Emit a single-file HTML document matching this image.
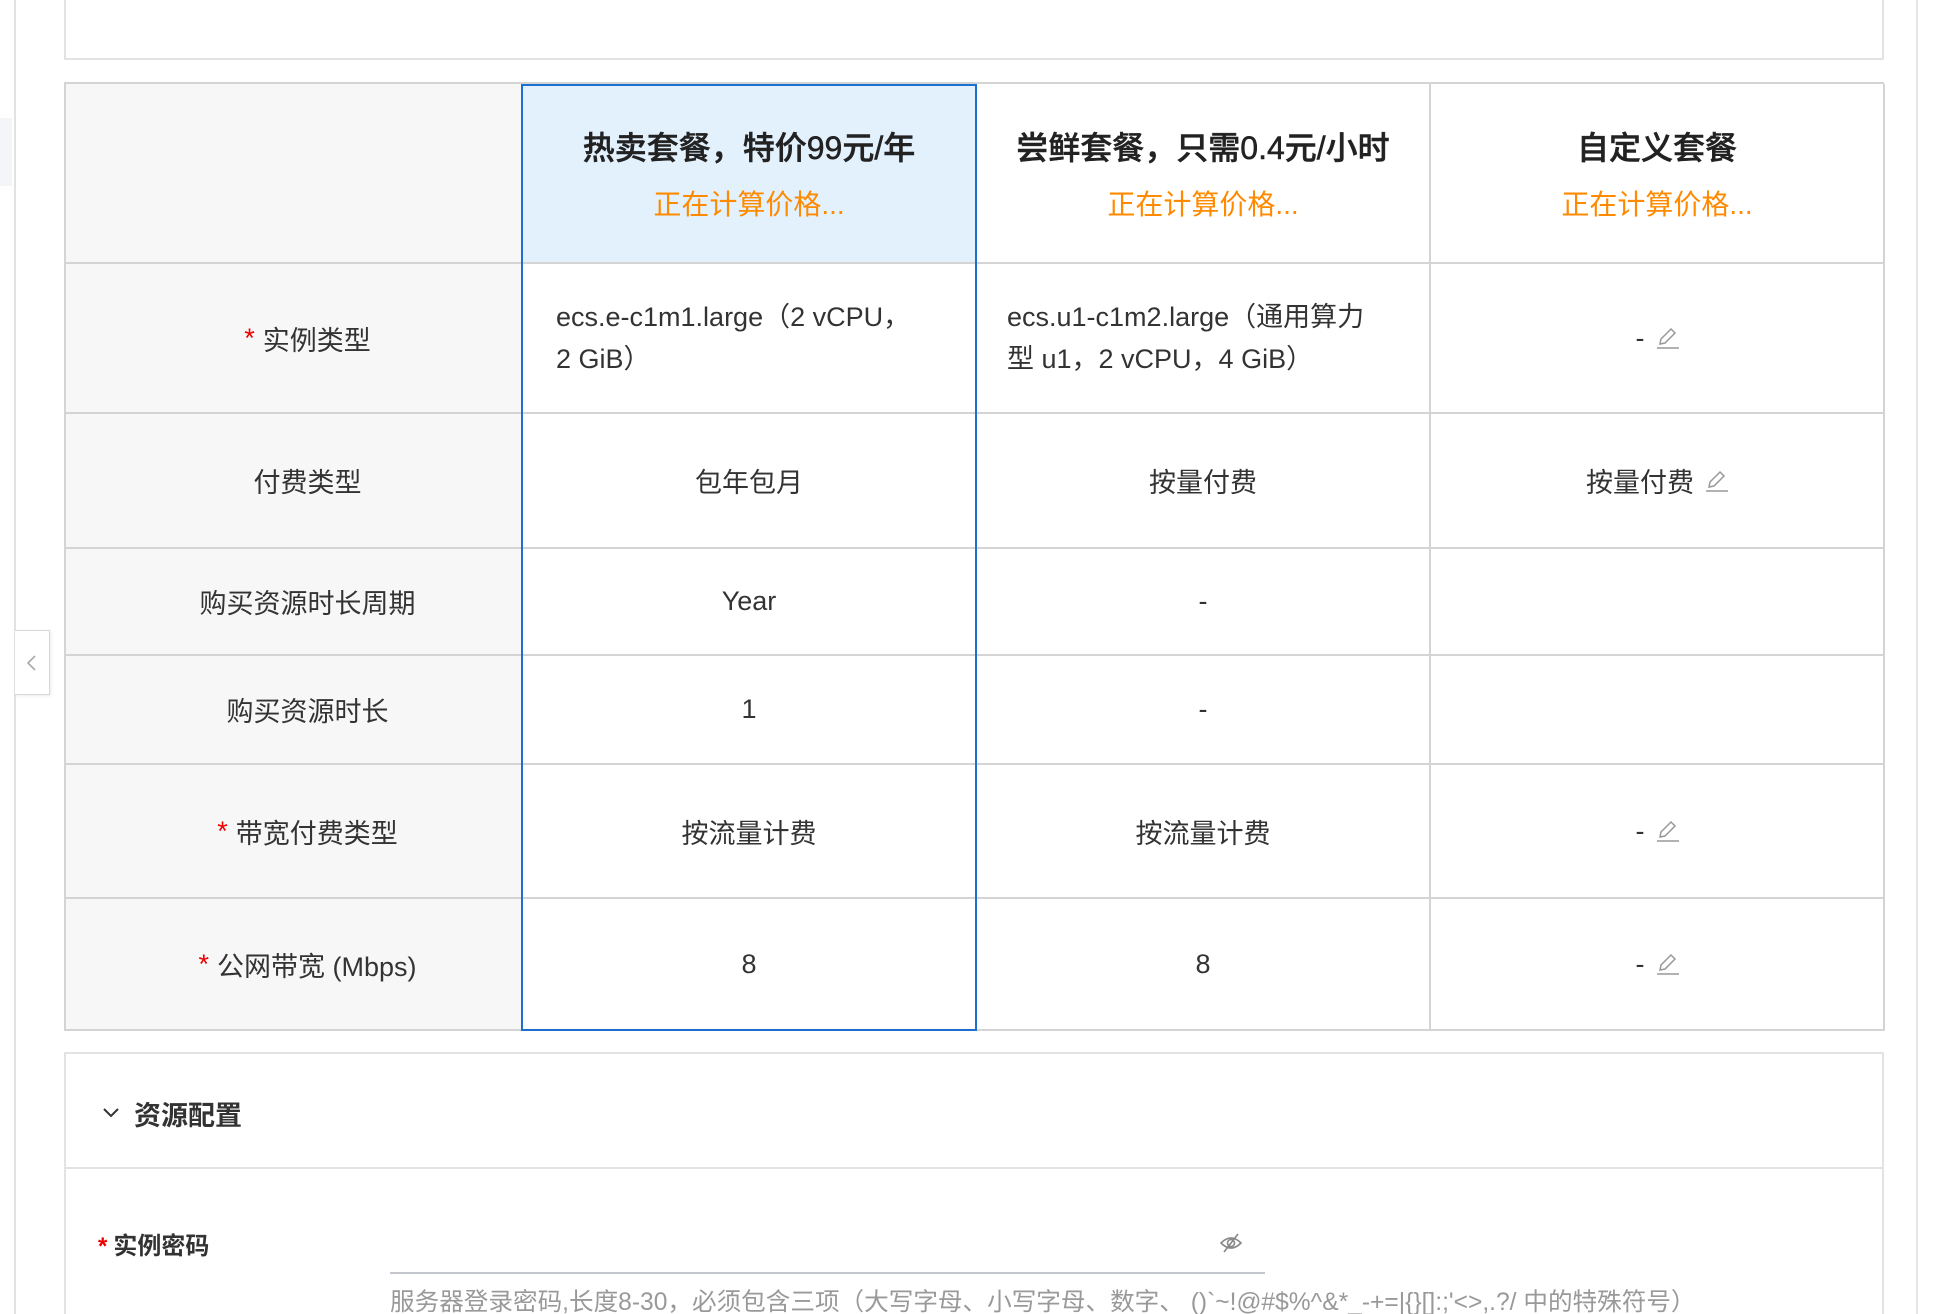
<!DOCTYPE html>
<html style="height:1314px;overflow:hidden"><head><meta charset="utf-8"><style>
*{box-sizing:border-box;margin:0;padding:0}
body{width:1940px;height:1314px;overflow:hidden;background:#fff;font-family:"Liberation Sans","Noto Sans CJK SC",sans-serif;color:#333;position:relative}
.abs{position:absolute}
.cell{position:absolute;display:flex;align-items:center;justify-content:center;font-size:27px;color:#333;border-right:2px solid #d4d4d4;border-bottom:2px solid #d4d4d4}
.lab{background:#f7f7f7;padding-left:28px}
.star{color:#e00;margin-right:8px}
.hd{flex-direction:column}
.hd .t{font-size:32px;font-weight:500;color:#222;-webkit-text-stroke:0.5px #222}
.hd .p{font-size:28px;color:#ff8a00;margin-top:14px}
.edit{display:inline-block;width:24px;height:24px;margin-left:10px;vertical-align:middle}
</style></head><body>
<div class="abs" style="left:14px;top:0;width:2px;height:1314px;background:#e2e2e2"></div>
<div class="abs" style="left:0;top:118px;width:12px;height:68px;background:#f3f5f8"></div>
<div class="abs" style="left:1916px;top:0;width:2px;height:1314px;background:#e6e6e6"></div>
<div class="abs" style="left:64px;top:-2px;width:1820px;height:62px;border:2px solid #e3e3e3"></div>

<div class="abs" style="left:64px;top:82px;width:1820px;height:949px;border-top:2px solid #d4d4d4;border-left:2px solid #d4d4d4"></div>
<div class="cell lab" style="left:66px;top:84px;width:457px;height:180px"></div>
<div class="cell hd" style="left:523px;top:84px;width:454px;height:180px;background:#e3f1fd"><div class="t">热卖套餐，特价99元/年</div><div class="p">正在计算价格...</div></div>
<div class="cell hd" style="left:977px;top:84px;width:454px;height:180px"><div class="t">尝鲜套餐，只需0.4元/小时</div><div class="p">正在计算价格...</div></div>
<div class="cell hd" style="left:1431px;top:84px;width:454px;height:180px"><div class="t">自定义套餐</div><div class="p">正在计算价格...</div></div>

<div class="cell lab" style="left:66px;top:264px;width:457px;height:150px"><span class="star">*</span>实例类型</div>
<div class="cell" style="left:523px;top:264px;width:454px;height:150px;justify-content:flex-start;padding-left:33px;line-height:42px"><div>ecs.e-c1m1.large（2 vCPU，<br>2 GiB）</div></div>
<div class="cell" style="left:977px;top:264px;width:454px;height:150px;justify-content:flex-start;padding-left:30px;line-height:42px"><div>ecs.u1-c1m2.large（通用算力<br>型 u1，2 vCPU，4 GiB）</div></div>
<div class="cell" style="left:1431px;top:264px;width:454px;height:150px">-<svg class="edit" viewBox="0 0 24 24"><path d="M5 18 L6 13 L16 3 L20 7 L10 17 Z" fill="none" stroke="#999" stroke-width="1.5"/><path d="M2 22 H26" stroke="#999" stroke-width="1.5"/></svg></div>

<div class="cell lab" style="left:66px;top:414px;width:457px;height:135px">付费类型</div>
<div class="cell" style="left:523px;top:414px;width:454px;height:135px">包年包月</div>
<div class="cell" style="left:977px;top:414px;width:454px;height:135px">按量付费</div>
<div class="cell" style="left:1431px;top:414px;width:454px;height:135px">按量付费<svg class="edit" viewBox="0 0 24 24"><path d="M5 18 L6 13 L16 3 L20 7 L10 17 Z" fill="none" stroke="#999" stroke-width="1.5"/><path d="M2 22 H26" stroke="#999" stroke-width="1.5"/></svg></div>

<div class="cell lab" style="left:66px;top:549px;width:457px;height:107px">购买资源时长周期</div>
<div class="cell" style="left:523px;top:549px;width:454px;height:107px">Year</div>
<div class="cell" style="left:977px;top:549px;width:454px;height:107px">-</div>
<div class="cell" style="left:1431px;top:549px;width:454px;height:107px"></div>

<div class="cell lab" style="left:66px;top:656px;width:457px;height:109px">购买资源时长</div>
<div class="cell" style="left:523px;top:656px;width:454px;height:109px">1</div>
<div class="cell" style="left:977px;top:656px;width:454px;height:109px">-</div>
<div class="cell" style="left:1431px;top:656px;width:454px;height:109px"></div>

<div class="cell lab" style="left:66px;top:765px;width:457px;height:134px"><span class="star">*</span>带宽付费类型</div>
<div class="cell" style="left:523px;top:765px;width:454px;height:134px">按流量计费</div>
<div class="cell" style="left:977px;top:765px;width:454px;height:134px">按流量计费</div>
<div class="cell" style="left:1431px;top:765px;width:454px;height:134px">-<svg class="edit" viewBox="0 0 24 24"><path d="M5 18 L6 13 L16 3 L20 7 L10 17 Z" fill="none" stroke="#999" stroke-width="1.5"/><path d="M2 22 H26" stroke="#999" stroke-width="1.5"/></svg></div>

<div class="cell lab" style="left:66px;top:899px;width:457px;height:132px"><span class="star">*</span>公网带宽 (Mbps)</div>
<div class="cell" style="left:523px;top:899px;width:454px;height:132px">8</div>
<div class="cell" style="left:977px;top:899px;width:454px;height:132px">8</div>
<div class="cell" style="left:1431px;top:899px;width:454px;height:132px">-<svg class="edit" viewBox="0 0 24 24"><path d="M5 18 L6 13 L16 3 L20 7 L10 17 Z" fill="none" stroke="#999" stroke-width="1.5"/><path d="M2 22 H26" stroke="#999" stroke-width="1.5"/></svg></div>

<div class="abs" style="left:521px;top:84px;width:456px;height:947px;border:2px solid #1b6fcf"></div>

<div class="abs" style="left:15px;top:630px;width:35px;height:65px;background:#fff;border:1px solid #d8d8d8;border-left:none;box-shadow:1px 1px 3px rgba(0,0,0,.08)"></div>
<svg class="abs" style="left:24px;top:654px" width="14" height="18" viewBox="0 0 14 18"><path d="M11 2 L4 9 L11 16" fill="none" stroke="#aaa" stroke-width="1.6"/></svg>

<div class="abs" style="left:64px;top:1052px;width:1820px;height:262px;border:2px solid #e3e3e3;border-bottom:none"></div>
<div class="abs" style="left:66px;top:1167px;width:1816px;height:2px;background:#e3e3e3"></div>
<svg class="abs" style="left:101px;top:1106px" width="20" height="14" viewBox="0 0 20 14"><path d="M3 3 L10 10 L17 3" fill="none" stroke="#333" stroke-width="2"/></svg>
<div class="abs" style="left:134px;top:1094px;font-size:27px;font-weight:bold;color:#333">资源配置</div>
<div class="abs" style="left:98px;top:1226px;font-size:24px;font-weight:bold;color:#333"><span style="color:#e00;margin-right:6px">*</span>实例密码</div>
<svg class="abs" style="left:1218px;top:1230px" width="26" height="26" viewBox="0 0 26 26"><path d="M3 13 Q13 3 23 13 Q13 23 3 13 Z" fill="none" stroke="#888" stroke-width="1.6"/><circle cx="13" cy="13" r="3.5" fill="none" stroke="#888" stroke-width="1.6"/><path d="M6 22 L20 4" stroke="#888" stroke-width="1.6"/></svg>
<div class="abs" style="left:390px;top:1272px;width:875px;height:2px;background:#c4c7cc"></div>
<div class="abs" style="left:390px;top:1282px;font-size:24.6px;color:#999;white-space:nowrap">服务器登录密码,长度8-30，必须包含三项（大写字母、小写字母、数字、 ()`~!@#$%^&amp;*_-+=|{}[]:;'&lt;&gt;,.?/ 中的特殊符号）</div>
</body></html>
